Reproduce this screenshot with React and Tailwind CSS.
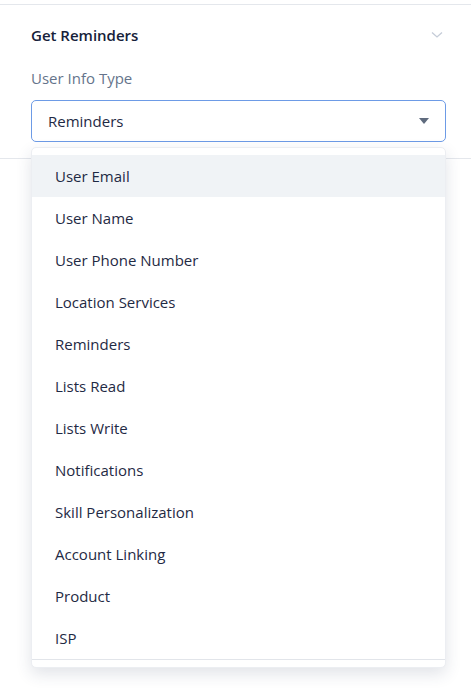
import React from "react";

const items = [
  "User Email",
  "User Name",
  "User Phone Number",
  "Location Services",
  "Reminders",
  "Lists Read",
  "Lists Write",
  "Notifications",
  "Skill Personalization",
  "Account Linking",
  "Product",
  "ISP",
];

export default function App() {
  return (
    <div
      className="relative w-[471px] h-[700px] bg-white overflow-hidden"
      style={{ fontFamily: '"Open Sans", "Noto Sans", sans-serif' }}
    >
      <div className="h-[4px]" />
      <div className="border-t border-[#e4e7ec]" />
      <div className="relative pl-[31px] pr-[25px] border-b border-[#e4e7ec] pb-[16px]">
        <div className="flex items-center justify-between h-[22px] mt-[19px]">
          <span className="text-[15px] font-semibold text-[#16213a]">Get Reminders</span>
          <svg width="12" height="8" viewBox="0 0 12 8" className="mr-[3px]">
            <path d="M1 1.5 L6 6 L11 1.5" fill="none" stroke="#c5ccd8" strokeWidth="1.3" />
          </svg>
        </div>
        <div className="mt-[21px] h-[22px] flex items-center text-[15px] text-[#65748b]">
          User Info Type
        </div>
        <div className="mt-[11px] h-[42px] w-[415px] rounded-[5px] border border-[#6d9be6] flex items-center justify-between pl-[16px] pr-[16px]">
          <span className="text-[15px] text-[#1f2a44]">Reminders</span>
          <svg width="10" height="6" viewBox="0 0 10 6">
            <path d="M0 0 L10 0 L5 6 Z" fill="#5f6b7e" />
          </svg>
        </div>
      </div>

      <div className="absolute left-[31px] top-[147px] w-[415px] bg-white rounded-[5px] border border-[#eceef2] shadow-[0_6px_16px_rgba(40,55,90,0.14)] overflow-hidden">
        <div className="pt-[7px] border-b border-[#e2e5ea]">
          {items.map((it, i) => (
            <div
              key={it}
              className={`h-[42px] flex items-center pl-[23px] text-[15px] text-[#1f2a44] ${
                i === 0 ? "bg-[#f0f3f6]" : ""
              }`}
            >
              {it}
            </div>
          ))}
        </div>
        <div className="h-[7px]" />
      </div>
    </div>
  );
}
